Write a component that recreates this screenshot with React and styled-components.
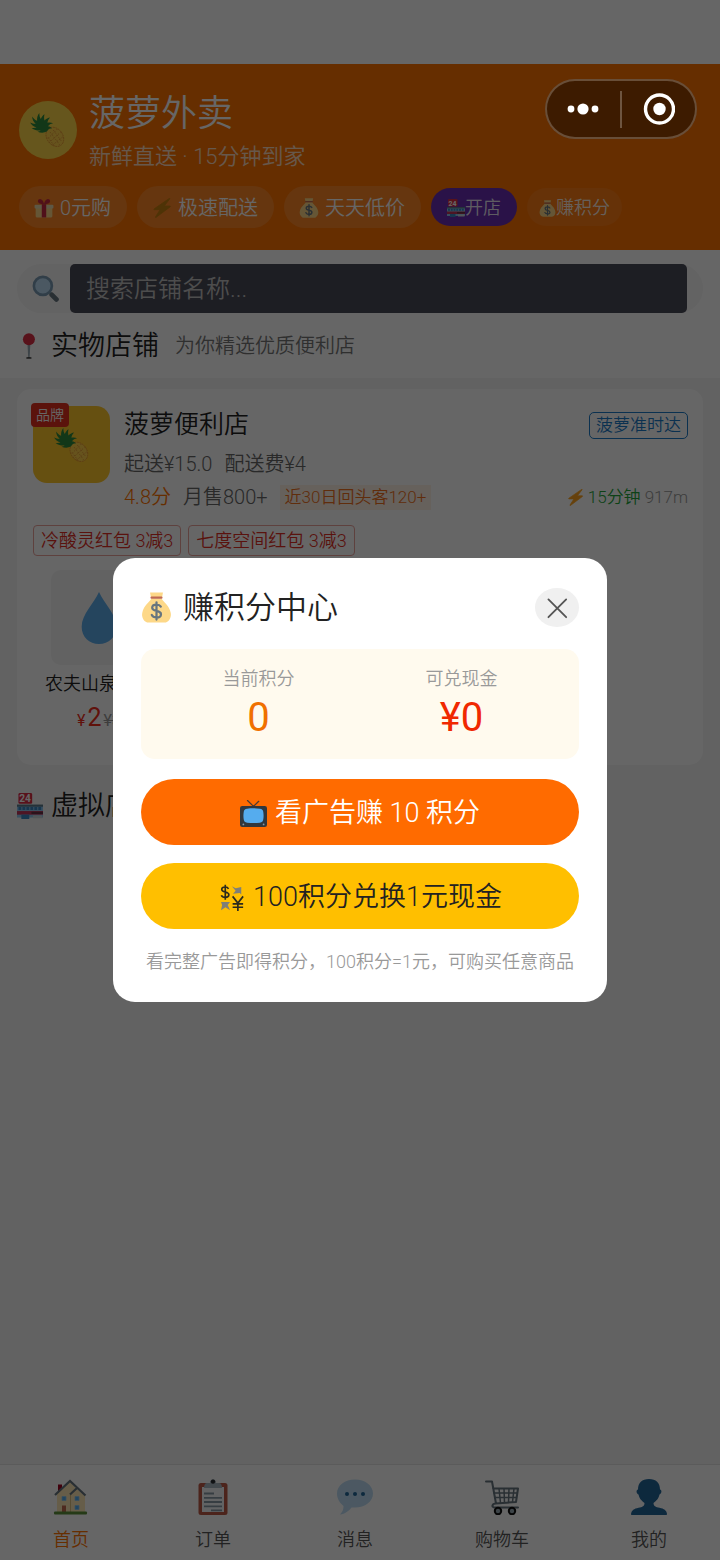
import React, { useState } from "react";
import styled, { createGlobalStyle } from "styled-components";

const GlobalStyle = createGlobalStyle`
  * {
    box-sizing: border-box;
  }

  body {
    margin: 0;
    background: #f5f5f5;
    color: #222;
    font-family: Roboto, "Noto Sans CJK SC", sans-serif;
    font-weight: 350;
  }

  h1,
  h2,
  h3,
  p {
    margin: 0;
    font-weight: inherit;
  }

  button,
  input {
    border: 0;
    padding: 0;
    font: inherit;
  }

  a {
    color: inherit;
    text-decoration: none;
  }
`;

/* ---------- icons ---------- */

const Svg = styled.svg`
  display: block;
  flex: none;
  width: ${p => p.$size}px;
  height: ${p => p.$size}px;
`;

const Icon = ({ size, children }) => (
  <Svg viewBox="0 0 36 36" $size={size} aria-hidden="true">
    {children}
  </Svg>
);

const Pineapple = props => (
  <Icon {...props}>
    <ellipse
      cx="24.5"
      cy="24.5"
      rx="7.6"
      ry="9.8"
      transform="rotate(-36 24.5 24.5)"
      fill="#ffcf4a"
      stroke="#e08a2c"
      strokeWidth="0.7"
      strokeDasharray="1.800 .7"
    />
    <path
      d="M20 20l9 12M23 18l8 11M18 25l6 8M19 30l11-10M18 26l9-9M22 32.500l10-8"
      fill="none"
      stroke="#e39a35"
      strokeWidth="0.9"
      strokeDasharray="1.500 1.300"
    />
    <path
      d="M17 19.500c-3 1.500-6 1.300-9 .2 1.400-.2 2.300-.6 3-1.200-3 .3-6-.6-8.500-2.500 2 .2 3.500 0 4.700-.4-2.700-.8-4.700-2.400-6.200-4.800 2 1 3.800 1.300 5.400 1.200C4.200 10.300 3 8 3 5.200c1.500 2.200 3 3.500 4.700 4.100C7.400 6.400 8 4 9.800 1.800c0 2.400.4 4.300 1.400 5.700.8-2 1.900-3.400 3.500-4.400-.6 2.200-.5 4.200 0 6 1.600-1.800 3.300-2.700 5.300-2.900-1.500 1.600-2.300 3.200-2.500 4.900 2-.5 3.700-.3 5.300.6-2.200.5-3.800 1.400-4.800 2.700 1.700.2 3 1 3.900 2.300-2-.1-3.600.2-4.900 2.800z"
      fill="#2e8b3d"
    />
  </Icon>
);

const Gift = props => (
  <Icon {...props}>
    <path d="M3 17h30v16a2 2 0 0 1-2 2H5a2 2 0 0 1-2-2z" fill="#fdd888" />
    <rect x="1" y="12" width="34" height="7" rx="2" fill="#e8dcb0" />
    <rect x="14" y="11" width="8" height="24" fill="#c92a42" />
    <path
      d="M18 11c-6 0-11-1-11-5s4-5 7-3c2 1.500 3.500 4.500 4 8zM18 11c6 0 11-1 11-5s-4-5-7-3c-2 1.500-3.500 4.500-4 8z"
      fill="#c92a42"
    />
  </Icon>
);

const Bolt = ({ color = "#ffa41f", ...props }) => (
  <Icon {...props}>
    <path
      d="M32 1.500c.4-.8-.3-1.100-1-.6L4 19.500c-1 .8-.8 1.500.4 1.500h10.200L6.300 34c-.5.900.3 1.400 1.100.8L32.500 16c1-.8.8-1.600-.4-1.600H22z"
      fill={color}
      stroke={color}
      strokeWidth="1.500"
    />
  </Icon>
);

const MoneyBag = props => (
  <Icon {...props}>
    <path
      d="M12 7.500C10 12 3 15.500 1.500 24c-.8 3.500.3 8 4 10.500 1 .7 2 1 3.500 1h18c1.500 0 2.500-.3 3.500-1 3.700-2.500 4.800-7 4-10.500C33 15.500 26 12 24 7.500z"
      fill="#fdd888"
    />
    <path d="M10.500.6h15L24.500 6h-13z" fill="#fdd888" />
    <rect x="11" y="5.200" width="14" height="2.600" rx="1.200" fill="#bf6952" />
    <path
      d="M23 17c-1-1.600-2.800-2.300-5-2.300-3 0-5 1.400-5 3.600 0 5 10.200 2.400 10.200 7.400 0 2.500-2.100 3.900-5.100 3.900-2.700 0-4.700-1-5.600-3M18 12v20"
      fill="none"
      stroke="#67757f"
      strokeWidth="2.600"
      strokeLinecap="round"
    />
  </Icon>
);

const StoreText = styled.text`
  font: 700 14px Roboto, sans-serif;
  fill: #fff;
`;

const Store = props => (
  <Icon {...props}>
    <rect x="0" y="17" width="36" height="17" fill="#8ec6ee" />
    <rect x="0" y="16" width="36" height="3" fill="#5c7a8c" />
    <path d="M2 21.500h32" stroke="#3b88c3" strokeWidth="4" strokeDasharray="4 1.500" />
    <rect x="0" y="25" width="36" height="5" fill="#c0355a" />
    <rect x="20" y="26" width="16" height="3" fill="#693044" />
    <rect x="6" y="30" width="11" height="6" fill="#3b88c3" />
    <rect x="22" y="31" width="13" height="4" fill="#ccd6dd" />
    <rect x="2" y="0" width="19" height="15" rx="2" fill="#dd2e44" />
    <StoreText x="3" y="13">
      24
    </StoreText>
  </Icon>
);

const Magnifier = props => (
  <Icon {...props}>
    <path d="M22 22l5 5" stroke="#9aaab4" strokeWidth="4" />
    <path d="M26.500 26.500l6 6" stroke="#66757f" strokeWidth="6.500" strokeLinecap="round" />
    <circle cx="14.500" cy="14.500" r="12" fill="#bbddf5" stroke="#7a9bb5" strokeWidth="3.500" />
  </Icon>
);

const Pin = props => (
  <Icon {...props}>
    <path d="M14.500 15h4l-1 19h-2z" fill="#99aab5" />
    <ellipse cx="16.500" cy="34.500" rx="4" ry="1.200" fill="#444" />
    <circle cx="16.500" cy="8.500" r="8.300" fill="#dd2e44" />
  </Icon>
);

const Drop = props => (
  <Icon {...props}>
    <path d="M18 0c3.500 8 12 15.500 12 24 0 7-5.300 12-12 12S6 31 6 24C6 15.500 14.500 8 18 0z" fill="#5dadec" />
  </Icon>
);

const Television = props => (
  <Icon {...props}>
    <path d="M18 8.500L10 .8M18 8.500l7-6.700" stroke="#4b3b33" strokeWidth="1.800" strokeLinecap="round" />
    <rect x="0" y="8" width="36" height="28" rx="3" fill="#31373d" />
    <path
      d="M9.500 11.500c6-.8 11-.8 17 0 3 .4 4 1.500 4.500 4 .6 4 .6 7 0 10.500-.5 2.800-1.500 3.800-4.500 4.200-6 .8-11 .8-17 0-3-.4-4-1.400-4.500-4.200-.6-3.500-.6-6.500 0-10.500.5-2.500 1.500-3.600 4.500-4z"
      fill="#55acee"
    />
    <circle cx="4.500" cy="32.500" r="1.200" fill="#8899a6" />
    <circle cx="31.500" cy="32.500" r="1.200" fill="#8899a6" />
  </Icon>
);

const Exchange = props => (
  <Icon {...props}>
    <path
      d="M14 6.500C13.200 4.700 11.500 4 9.500 4 7 4 5 5.200 5 7.300c0 4.600 9.500 2.300 9.500 7 0 2.200-2.200 3.500-4.900 3.500-2.600 0-4.400-1-5.100-2.900M9.700 1v20"
      fill="none"
      stroke="#2b2a1d"
      strokeWidth="2.200"
    />
    <path
      d="M19.500 16.500l7 9 7-9M26.500 25v11M19.500 26.500h14M19.500 31h14"
      fill="none"
      stroke="#2b2a1d"
      strokeWidth="2.200"
    />
    <path d="M18.500 3l5 2.500L31 4v10l-2-2-9 1 3.500-4zM4 35l1.500-7-1.500-4h12l-3 4 3 7-6-4z" fill="#7f7f78" />
  </Icon>
);

const House = props => (
  <Icon {...props}>
    <rect x="5" y="5.500" width="4" height="9" fill="#a0041e" />
    <path d="M4 15L17 3l8 8 7 6v16H4z" fill="#ffe8b6" />
    <path d="M17.500 16v17" stroke="#d9bd80" strokeWidth="1" />
    <path d="M2 16L17 2 32.500 16.500M17 15.500L23.500 9.500" fill="none" stroke="#66757f" strokeWidth="2.200" />
    <path
      d="M9 17.500h4v4H9zM22 17.500h4v4h-4zM22 26.500h4v4h-4z"
      fill="#55acee"
      stroke="#8ec6ee"
      strokeWidth="0.800"
    />
    <rect x="9" y="26.500" width="4" height="7" fill="#c1694f" />
    <rect x="1" y="32.500" width="33" height="3" rx="1" fill="#5c913b" />
  </Icon>
);

const Clipboard = props => (
  <Icon {...props}>
    <rect x="3.500" y="4" width="29" height="32" rx="2.500" fill="#be5b48" />
    <rect x="7" y="8" width="22" height="25" fill="#f5f8fa" />
    <path d="M12 4h3c0-5 6-5 6 0h3c2 0 3 2 3 5H9c0-3 1-5 3-5z" fill="#aab8c2" />
    <circle cx="18" cy="2.600" r="2.200" fill="#292f33" />
    <path d="M9 14.500h10M9 18.800h18M9 23h18M9 27.300h18M16 31.300h11" stroke="#8899a6" strokeWidth="1.800" />
  </Icon>
);

const Speech = props => (
  <Icon {...props}>
    <path
      d="M18 .5C8 .5 0 6.500 0 14.500c0 5.500 3 9.500 6.500 12.500 0 3.500-1 6-3.500 8.500 5-.6 9-3.500 11.500-7H18c10 0 18-6 18-14S28 .5 18 .5z"
      fill="#bdddf4"
    />
    <circle cx="10" cy="15" r="2" fill="#226699" />
    <circle cx="18" cy="15" r="2" fill="#226699" />
    <circle cx="26" cy="15" r="2" fill="#226699" />
  </Icon>
);

const Cart = props => (
  <Icon {...props}>
    <path
      d="M2 2.500h6l4 22c-4 0-5 4-1 4h23M9 9.500h25l-2 13.500-20.500 1.500"
      fill="none"
      stroke="#66757f"
      strokeWidth="2"
      strokeLinejoin="round"
      strokeLinecap="round"
    />
    <path
      d="M9.500 14h23.500M10.500 18.500h22M15 9.500l1.500 14.500M20 9.500l.5 14.500M25 9.500l-.5 14M30 9.500l-1.500 13.500"
      fill="none"
      stroke="#66757f"
      strokeWidth="1.500"
    />
    <circle cx="14" cy="32" r="3.200" fill="#99aab5" stroke="#111" strokeWidth="2" />
    <circle cx="28" cy="32" r="3.200" fill="#99aab5" stroke="#111" strokeWidth="2" />
  </Icon>
);

const Person = props => (
  <Icon {...props}>
    <path
      d="M18 0c7 0 11 4 11 10.500 2 .5 2 4-.5 5C27.500 20 25 22 22.500 24c0 3 2 4 6 4.800 4.500 1 7 2.500 7.500 6.200 0 .7-.4 1-1 1H1c-.6 0-1-.3-1-1 .5-3.700 3-5.200 7.500-6.200 4-.8 6-1.800 6-4.800-2.500-2-5-4-6-8.500-2.500-1-2.500-4.500-.5-5C7 4 11 0 18 0z"
      fill="#226699"
    />
  </Icon>
);

const Cross = () => (
  <Icon size={22}>
    <path d="M4 4l29 29M33 4L4 33" stroke="#555" strokeWidth="3" strokeLinecap="round" />
  </Icon>
);

/* ---------- page ---------- */

const Page = styled.div`
  display: flex;
  flex-direction: column;
  min-height: 100vh;
`;

const StatusBar = styled.div`
  height: 64px;
  background: #fff;
`;

const Header = styled.header`
  padding: 24px 19px 22px;
  background: #ff7300;
  color: #fff;
`;

const Brand = styled.div`
  display: flex;
  align-items: center;
  gap: 12px;
  margin-bottom: 14px;
`;

const BrandLogo = styled.div`
  display: flex;
  align-items: center;
  justify-content: center;
  width: 58px;
  height: 58px;
  border-radius: 50%;
  background: #ffd84a;
`;

const BrandName = styled.h1`
  font-size: 36px;
  line-height: 52px;
`;

const BrandSlogan = styled.p`
  font-size: 22px;
  line-height: 34px;
  margin-bottom: -2px;
  opacity: 0.75;
`;

const Pills = styled.div`
  display: flex;
  align-items: center;
  gap: 10px;
`;

const Pill = styled.span`
  display: flex;
  align-items: center;
  gap: 6px;
  height: 42px;
  padding: 2px 16px 0 15px;
  border-radius: 21px;
  background: rgba(255, 255, 255, 0.15);
  font-size: 20px;
  line-height: 24px;
  white-space: nowrap;
`;

const PillButton = styled.button`
  display: flex;
  align-items: center;
  height: 38px;
  padding: 2px ${p => (p.$primary ? 16 : 12)}px 0;
  border-radius: 19px;
  background: ${p => (p.$primary ? "#6a2fb4" : "rgba(255, 255, 255, 0.08)")};
  color: rgba(255, 255, 255, 0.9);
  font-size: 18px;
  line-height: 24px;
  white-space: nowrap;
`;

const Top = styled.section`
  padding: 14px 17px 12px;
  background: #fff;
`;

const SearchBox = styled.label`
  display: flex;
  align-items: center;
  gap: 11px;
  margin-bottom: 13px;
  padding: 0 16px 0 15px;
  border-radius: 25px;
  background: #f7f7f7;
`;

const SearchInput = styled.input`
  flex: 1;
  min-width: 0;
  height: 49px;
  padding: 0 16px;
  border-radius: 5px;
  background: #4a4b58;
  color: #fff;
  font-size: 24px;
  outline: none;

  &::placeholder {
    color: #c0c0c0;
    opacity: 1;
  }
`;

const SectionHead = styled.div`
  display: flex;
  align-items: center;
  gap: 8px;
  line-height: 40px;
`;

const SectionTitle = styled.h2`
  font-size: 27px;
`;

const SectionNote = styled.span`
  margin-left: 8px;
  color: #777;
  font-size: 20px;
`;

const Content = styled.main`
  flex: 1;
  padding: 11px 17px;
`;

const Card = styled.article`
  margin-bottom: 21px;
  padding: 17px 15px 29px 16px;
  border-radius: 14px;
  background: #fff;
`;

const Shop = styled.div`
  display: flex;
  align-items: flex-start;
  gap: 14px;
`;

const ShopLogo = styled.div`
  display: flex;
  flex: none;
  align-items: center;
  justify-content: center;
  position: relative;
  width: 77px;
  height: 77px;
  border-radius: 14px;
  background: #ffc72c;
`;

const BrandTag = styled.span`
  position: absolute;
  top: -3px;
  left: -2px;
  padding: 0 5px;
  border-radius: 4px;
  background: #e3301f;
  color: #fff;
  font-size: 14px;
  line-height: 24px;
`;

const ShopInfo = styled.div`
  flex: 1;
  min-width: 0;
`;

const ShopRow = styled.div`
  display: flex;
  align-items: center;
  gap: 12px;
  margin-bottom: ${p => (p.$last ? 14 : 4)}px;
  color: #666;
  font-size: 20px;
  line-height: ${p => p.$line}px;
  white-space: nowrap;
`;

const ShopName = styled.h3`
  color: #222;
  font-size: 25px;
`;

const OnTime = styled.span`
  margin-left: auto;
  padding: 0 6px;
  border: 1px solid #1c7cc8;
  border-radius: 5px;
  color: #1c7cc8;
  font-size: 17px;
  line-height: 25px;
`;

const Score = styled.span`
  color: #ff7300;
`;

const Returning = styled.span`
  padding: 0 5px;
  background: #fff3e6;
  color: #f07020;
  font-size: 17px;
  line-height: 25px;
`;

const Delivery = styled.span`
  display: flex;
  align-items: center;
  gap: 4px;
  margin-left: auto;
  color: #999;
  font-size: 17px;
`;

const Minutes = styled.span`
  color: #22a53a;
`;

const Coupons = styled.div`
  display: flex;
  gap: 7px;
  margin-bottom: 14px;
`;

const Coupon = styled.span`
  padding: 0 7px;
  border: 1px solid #eaa29c;
  border-radius: 4px;
  color: #e02e24;
  font-size: 18px;
  line-height: 29px;
  white-space: nowrap;
`;

const Product = styled.div`
  display: flex;
  flex-direction: column;
  align-items: center;
  width: 132px;
`;

const ProductImage = styled.div`
  display: flex;
  align-items: center;
  justify-content: center;
  width: 96px;
  height: 95px;
  border-radius: 10px;
  background: #f5f5f5;
`;

const ProductName = styled.p`
  margin: 7px 0;
  font-size: 18px;
  line-height: 24px;
  white-space: nowrap;
`;

const Price = styled.p`
  display: flex;
  align-items: baseline;
  gap: 2px;
  color: #f02d1c;
  font-size: 16px;
  font-weight: 400;
  line-height: 30px;

  strong {
    font-size: 25px;
    font-weight: inherit;
  }

  s {
    color: #999;
  }
`;

const TabBar = styled.nav`
  display: flex;
  justify-content: space-around;
  padding: 14px 0 7px;
  border-top: 1px solid #e4e4e4;
  background: #fff;
`;

const Tab = styled.a`
  display: flex;
  flex-direction: column;
  align-items: center;
  gap: 12px;
  min-width: 44px;
  color: ${p => (p.$active ? "#ff7300" : "#555")};
  font-size: 18px;
  line-height: 26px;
`;

/* ---------- mini program capsule ---------- */

const Capsule = styled.div`
  display: flex;
  align-items: center;
  position: fixed;
  top: 79px;
  right: 23px;
  z-index: 3;
  width: 152px;
  height: 60px;
  border: 2px solid rgba(255, 255, 255, 0.22);
  border-radius: 30px;
  background: rgba(0, 0, 0, 0.4);
`;

const CapsuleButton = styled.button`
  display: flex;
  flex: 1;
  align-items: center;
  justify-content: center;
  height: 100%;
  background: none;
`;

const CapsuleDivider = styled.span`
  width: 2px;
  height: 37px;
  background: rgba(255, 255, 255, 0.25);
`;

/* ---------- dialog ---------- */

const Mask = styled.div`
  display: flex;
  align-items: center;
  justify-content: center;
  position: fixed;
  inset: 0;
  z-index: 2;
  background: rgba(0, 0, 0, 0.6);
`;

const Dialog = styled.div`
  width: 494px;
  max-width: calc(100% - 48px);
  padding: 30px 28px 27px;
  border-radius: 22px;
  background: #fff;
`;

const DialogHead = styled.div`
  display: flex;
  align-items: center;
  gap: 11px;
  margin-bottom: 22px;
`;

const DialogTitle = styled.h2`
  flex: 1;
  font-size: 31px;
  line-height: 39px;
`;

const CloseButton = styled.button`
  display: flex;
  align-items: center;
  justify-content: center;
  width: 44px;
  height: 39px;
  border-radius: 50%;
  background: #f0f0f0;
`;

const Stats = styled.div`
  display: flex;
  margin-bottom: 20px;
  padding: 16px;
  border-radius: 14px;
  background: #fffaee;
`;

const Stat = styled.div`
  flex: 1;
  color: ${p => p.$color};
  font-size: 40px;
  font-weight: 400;
  line-height: 50px;
  text-align: center;
`;

const StatLabel = styled.div`
  color: #999;
  font-size: 18px;
  font-weight: 350;
  line-height: 28px;
`;

const ActionButton = styled.button`
  display: flex;
  align-items: center;
  justify-content: center;
  gap: 8px;
  width: 100%;
  height: 66px;
  margin-bottom: ${p => (p.$yellow ? 20 : 18)}px;
  padding-top: 2px;
  border-radius: 33px;
  background: ${p => (p.$yellow ? "#ffbf00" : "#ff6b00")};
  color: ${p => (p.$yellow ? "#222" : "#fff")};
  font-size: 27px;
  line-height: 30px;
`;

const Hint = styled.p`
  color: #999;
  font-size: 18px;
  line-height: 26px;
  text-align: center;
  white-space: nowrap;
`;

const tabs = [
  { label: "首页", icon: House, active: true },
  { label: "订单", icon: Clipboard },
  { label: "消息", icon: Speech },
  { label: "购物车", icon: Cart },
  { label: "我的", icon: Person }
];

const coupons = ["冷酸灵红包 3减3", "七度空间红包 3减3"];

const PointsDialog = ({ onClose }) => (
  <Mask>
    <Dialog role="dialog" aria-labelledby="points-title">
      <DialogHead>
        <MoneyBag size={31} />
        <DialogTitle id="points-title">赚积分中心</DialogTitle>
        <CloseButton aria-label="关闭" onClick={onClose}>
          <Cross />
        </CloseButton>
      </DialogHead>
      <Stats>
        <Stat $color="#f07000">
          <StatLabel>当前积分</StatLabel>0
        </Stat>
        <Stat $color="#f02800">
          <StatLabel>可兑现金</StatLabel>¥0
        </Stat>
      </Stats>
      <ActionButton>
        <Television size={27} />
        看广告赚 10 积分
      </ActionButton>
      <ActionButton $yellow>
        <Exchange size={27} />
        100积分兑换1元现金
      </ActionButton>
      <Hint>看完整广告即得积分，100积分=1元，可购买任意商品</Hint>
    </Dialog>
  </Mask>
);

const App = () => {
  const [open, setOpen] = useState(true);

  return (
    <Page>
      <GlobalStyle />
      <StatusBar />
      <Header>
        <Brand>
          <BrandLogo>
            <Pineapple size={38} />
          </BrandLogo>
          <div>
            <BrandName>菠萝外卖</BrandName>
            <BrandSlogan>新鲜直送 · 15分钟到家</BrandSlogan>
          </div>
        </Brand>
        <Pills>
          <Pill>
            <Gift size={20} />
            0元购
          </Pill>
          <Pill>
            <Bolt size={20} color="#c47f10" />
            极速配送
          </Pill>
          <Pill>
            <MoneyBag size={20} />
            天天低价
          </Pill>
          <PillButton $primary onClick={() => setOpen(true)}>
            <Store size={18} />
            开店
          </PillButton>
          <PillButton onClick={() => setOpen(true)}>
            <MoneyBag size={17} />
            赚积分
          </PillButton>
        </Pills>
      </Header>

      <Top>
        <SearchBox>
          <Magnifier size={27} />
          <SearchInput aria-label="搜索店铺" placeholder="搜索店铺名称..." />
        </SearchBox>
        <SectionHead>
          <Pin size={26} />
          <SectionTitle>实物店铺</SectionTitle>
          <SectionNote>为你精选优质便利店</SectionNote>
        </SectionHead>
      </Top>

      <Content>
        <Card>
          <Shop>
            <ShopLogo>
              <Pineapple size={38} />
              <BrandTag>品牌</BrandTag>
            </ShopLogo>
            <ShopInfo>
              <ShopRow $line={38}>
                <ShopName>菠萝便利店</ShopName>
                <OnTime>菠萝准时达</OnTime>
              </ShopRow>
              <ShopRow $line={32}>
                <span>起送¥15.0</span>
                <span>配送费¥4</span>
              </ShopRow>
              <ShopRow $line={27} $last>
                <Score>4.8分</Score>
                <span>月售800+</span>
                <Returning>近30日回头客120+</Returning>
                <Delivery>
                  <Bolt size={17} />
                  <Minutes>15分钟</Minutes>
                  917m
                </Delivery>
              </ShopRow>
            </ShopInfo>
          </Shop>
          <Coupons>
            {coupons.map(c => (
              <Coupon key={c}>{c}</Coupon>
            ))}
          </Coupons>
          <Product>
            <ProductImage>
              <Drop size={52} />
            </ProductImage>
            <ProductName>农夫山泉饮用</ProductName>
            <Price>
              ¥<strong>2</strong>
              <s>¥3</s>
            </Price>
          </Product>
        </Card>
        <SectionHead>
          <Store size={26} />
          <SectionTitle>虚拟店铺</SectionTitle>
        </SectionHead>
      </Content>

      <TabBar>
        {tabs.map(({ label, icon: TabIcon, active }) => (
          <Tab key={label} href="#" $active={active}>
            <TabIcon size={36} />
            {label}
          </Tab>
        ))}
      </TabBar>

      <Capsule>
        <CapsuleButton aria-label="更多">
          <svg width="34" height="14" viewBox="0 0 34 14" fill="#fff">
            <circle cx="4" cy="7" r="3.400" />
            <circle cx="16" cy="7" r="5.600" />
            <circle cx="28" cy="7" r="3.400" />
          </svg>
        </CapsuleButton>
        <CapsuleDivider />
        <CapsuleButton aria-label="退出" onClick={() => setOpen(false)}>
          <svg width="32" height="32" viewBox="0 0 32 32">
            <circle cx="16.500" cy="16" r="14" fill="none" stroke="#fff" strokeWidth="3.400" />
            <circle cx="16.500" cy="16" r="6.200" fill="#fff" />
          </svg>
        </CapsuleButton>
      </Capsule>

      {open && <PointsDialog onClose={() => setOpen(false)} />}
    </Page>
  );
};

export default App;
